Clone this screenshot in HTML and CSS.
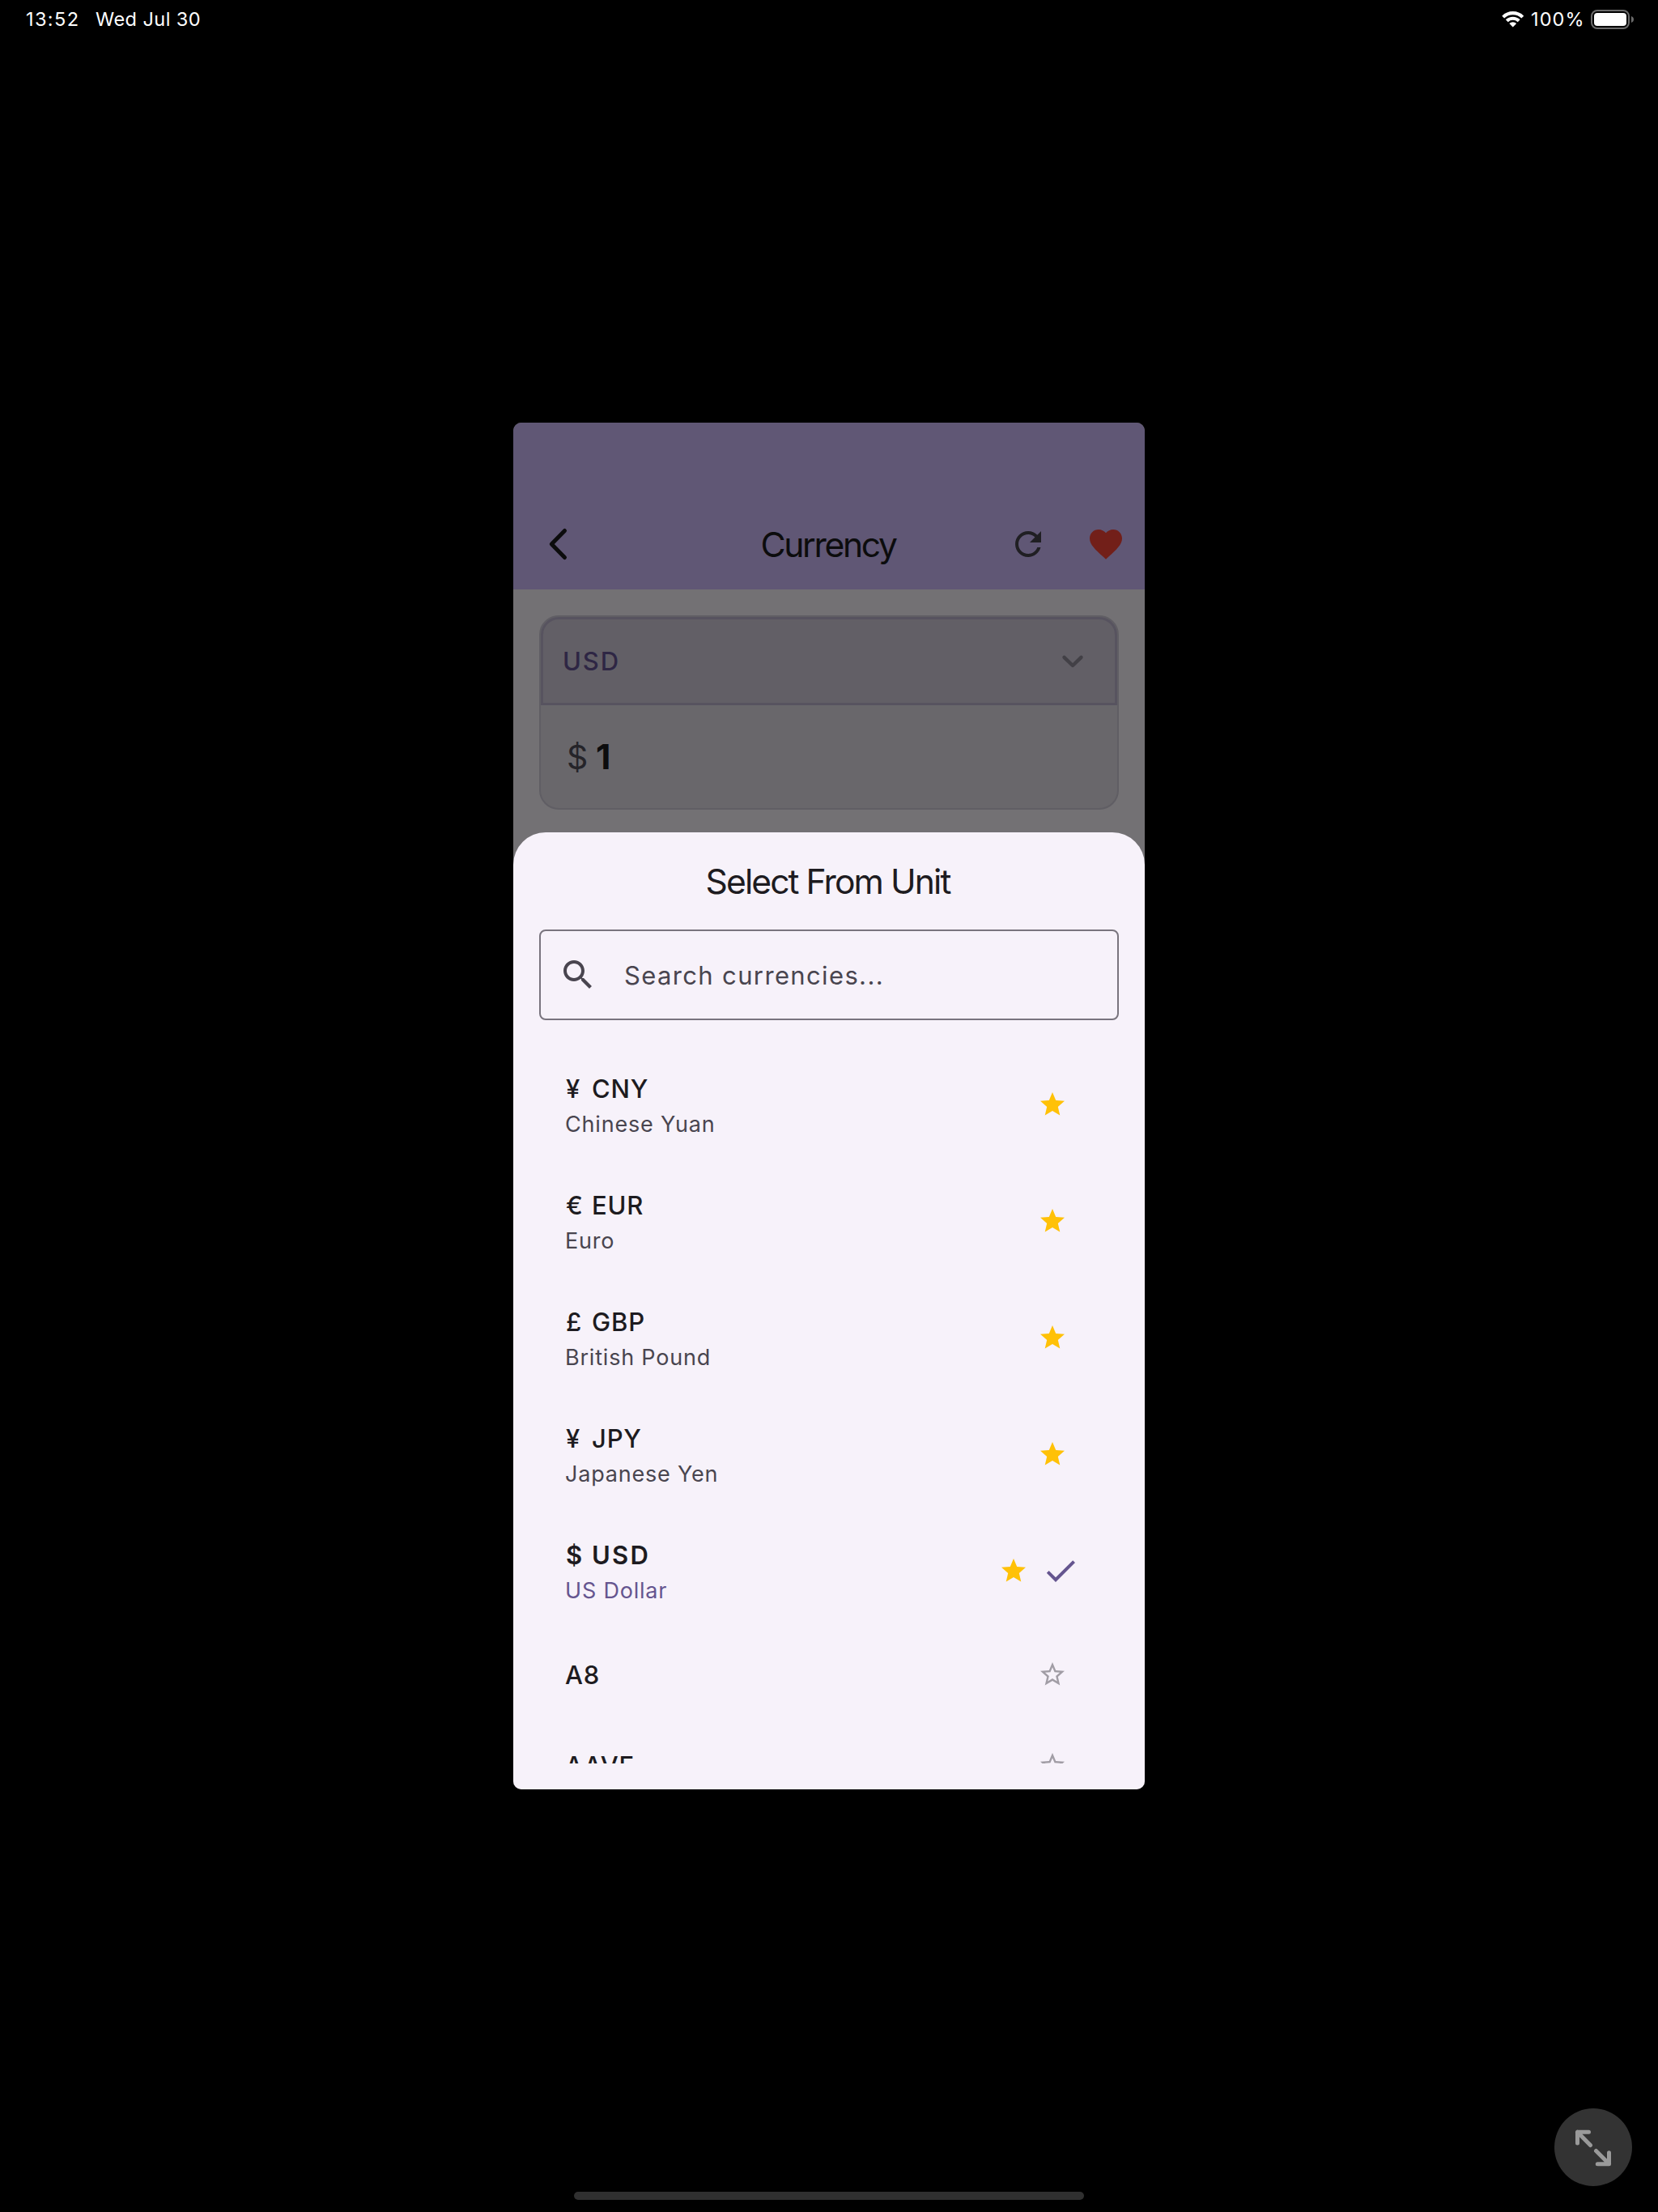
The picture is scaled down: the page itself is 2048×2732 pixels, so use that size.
FILE: index.html
```
<!DOCTYPE html>
<html lang="en">
<head>
<meta charset="utf-8">
<title>Currency</title>
<link rel="stylesheet" href="styles.css">
</head>
<body>
<svg class="sprite" width="0" height="0">
  <symbol id="star" viewBox="0 0 24 24"><path d="M12 17.27 18.18 21l-1.64-7.03L22 9.24l-7.19-.61L12 2 9.19 8.63 2 9.24l5.46 4.73L5.82 21z"/></symbol>
  <symbol id="star-border" viewBox="0 0 24 24"><path d="M22 9.24l-7.19-.62L12 2 9.19 8.63 2 9.24l5.46 4.73L5.82 21 12 17.27 18.18 21l-1.63-7.03L22 9.24zM12 15.4l-3.76 2.27 1-4.28-3.32-2.88 4.38-.38L12 6.1l1.71 4.04 4.38.38-3.32 2.88 1 4.28L12 15.4z"/></symbol>
</svg>
<header class="status">
  <span class="time">13:52</span>
  <span class="date">Wed Jul 30</span>
  <svg class="wifi" width="28" height="22" viewBox="0 0 28 22"><g fill="none" stroke="#fff" stroke-width="4.1"><path d="M1.7 8.1a17.2 17.2 0 0 1 24.1 0"/><path d="M6.3 12.8a10.6 10.6 0 0 1 14.9 0"/></g><path d="M9.3 16.1a6.3 6.3 0 0 1 8.9 0L13.75 20.6z" fill="#fff"/></svg>
  <span class="percent">100%</span>
  <svg class="battery" width="54" height="24" viewBox="0 0 54 24"><rect x="1" y="1" width="46" height="22" rx="7" fill="none" stroke="#6b6b6b" stroke-width="2"/><rect x="4" y="4" width="40" height="16" rx="4" fill="#fff"/><path d="M50 8c4 1.2 4 6.800 0 8z" fill="#6b6b6b"/></svg>
</header>
<main class="phone">
  <div class="appbar">
    <div class="side"><svg class="back" width="26" height="44" viewBox="0 0 26 44"><path d="M21.500 5.500 5.300 22l16.200 16.500" fill="none" stroke="#0c0c0d" stroke-width="5" stroke-linecap="round" stroke-linejoin="round"/></svg></div>
    <h1>Currency</h1>
    <div class="side actions">
      <svg width="48" height="48" viewBox="0 0 24 24" fill="#201f23"><path d="M17.650 6.350C16.200 4.900 14.210 4 12 4c-4.420 0-7.990 3.580-7.990 8s3.570 8 7.990 8c3.730 0 6.840-2.550 7.730-6h-2.080c-.82 2.330-3.040 4-5.650 4-3.310 0-6-2.690-6-6s2.690-6 6-6c1.660 0 3.140.69 4.220 1.780L13 11h7V4l-2.350 2.350z"/></svg>
      <svg width="48" height="48" viewBox="0 0 24 24" fill="#721f19"><path d="m12 21.350-1.450-1.320C5.400 15.360 2 12.280 2 8.500 2 5.420 4.420 3 7.500 3c1.740 0 3.410.81 4.500 2.090C13.090 3.810 14.760 3 16.500 3 19.580 3 22 5.420 22 8.500c0 3.780-3.400 6.860-8.550 11.540L12 21.350z"/></svg>
    </div>
  </div>
  <section class="card">
    <div class="unit"><span>USD</span><svg width="30" height="20" viewBox="0 0 30 20"><path d="M4.500 4.800 15 15 25.500 4.800" fill="none" stroke="#424046" stroke-width="4.400" stroke-linecap="round" stroke-linejoin="round"/></svg></div>
    <div class="amount"><span class="sign">$</span><span class="value">1</span></div>
  </section>
  <section class="sheet">
    <h2>Select From Unit</h2>
    <div class="search">
      <svg width="48" height="48" viewBox="0 0 24 24" fill="#49454f"><path d="M15.500 14h-.79l-.28-.27C15.410 12.590 16 11.110 16 9.500 16 5.910 13.090 3 9.500 3S3 5.910 3 9.500 5.910 16 9.500 16c1.610 0 3.090-.59 4.230-1.570l.27.28v.79l5 4.990L20.490 19l-4.990-5zm-6 0C7.010 14 5 11.990 5 9.500S7.010 5 9.500 5 14 7.010 14 9.500 11.990 14 9.500 14z"/></svg>
      <span>Search currencies...</span>
    </div>
    <ul class="list">
      <li><div class="text"><p class="code"><span class="symbol">¥</span> <span>CNY</span></p><p class="name">Chinese Yuan</p></div><svg class="star"><use href="#star"/></svg></li>
      <li><div class="text"><p class="code"><span class="symbol">€</span> <span>EUR</span></p><p class="name">Euro</p></div><svg class="star"><use href="#star"/></svg></li>
      <li><div class="text"><p class="code"><span class="symbol">£</span> <span>GBP</span></p><p class="name">British Pound</p></div><svg class="star"><use href="#star"/></svg></li>
      <li><div class="text"><p class="code"><span class="symbol">¥</span> <span>JPY</span></p><p class="name">Japanese Yen</p></div><svg class="star"><use href="#star"/></svg></li>
      <li class="selected"><div class="text"><p class="code"><span class="symbol">$</span> <span>USD</span></p><p class="name">US Dollar</p></div><svg class="star"><use href="#star"/></svg><svg width="48" height="48" viewBox="0 0 24 24" fill="#65558f"><path d="M9 16.170 4.830 12l-1.420 1.410L9 19 21 7l-1.410-1.410z"/></svg></li>
      <li class="single"><div class="text"><p class="code"><span>A8</span></p></div><svg class="star off"><use href="#star-border"/></svg></li>
      <li class="single"><div class="text"><p class="code"><span>AAVE</span></p></div><svg class="star off"><use href="#star-border"/></svg></li>
    </ul>
  </section>
</main>
<button class="expand" aria-label="Expand"><svg width="48" height="48" viewBox="0 0 48 48"><g fill="none" stroke="#9a9a9a" stroke-width="5" stroke-linecap="round" stroke-linejoin="round"><path d="M18.500 5.200H4.500V19M4.500 5.200 20.500 21.500M27.500 28.500 43.500 44.500M29.300 44.700H43.500V30.700"/></g></svg></button>
<div class="home"></div>
</body>
</html>
```
FILE: styles.css
```
* { box-sizing: border-box; margin: 0; padding: 0; }
body {
  position: relative;
  height: 2732px;
  background: #000;
  font-family: Inter, "Liberation Sans", sans-serif;
  overflow: hidden;
}
.sprite { position: absolute; }
svg { display: block; flex: none; }

.status {
  display: flex;
  align-items: center;
  height: 48px;
  padding: 0 29px 0 32px;
  color: #fff;
  font-size: 23.5px;
  font-weight: 400;
  line-height: 48px;
}
.time { width: 86px; letter-spacing: 1.4px; }
.date { letter-spacing: 0.45px; }
.wifi { margin-left: auto; }
.percent { width: 74px; margin-left: 8px; letter-spacing: 1.1px; }

.phone {
  display: flex;
  flex-direction: column;
  width: 780px;
  height: 1688px;
  margin: 474px auto 0;
  border-radius: 10px;
  background: #737174;
  overflow: hidden;
}
.appbar {
  display: flex;
  align-items: center;
  height: 206px;
  padding: 94px 24px 0;
  background: #605775;
}
.side { flex: 1 1 0; display: flex; }
.back { margin-left: 18px; }
.actions { justify-content: flex-end; gap: 48px; }
.appbar h1 {
  padding: 2px 2px 0 0;
  font-size: 42.6px;
  font-weight: 400;
  line-height: 56px;
  letter-spacing: -2.35px;
  color: #0c0c0d;
}
.card {
  height: 240px;
  margin: 32px 32px 0;
  border: 2px solid #605e64;
  border-radius: 24px;
  background: #69676b;
}
.unit {
  display: flex;
  align-items: center;
  justify-content: space-between;
  height: 109px;
  padding: 0 37px 0 24px;
  border: 3px solid #57535f;
  border-radius: 22px 22px 0 0;
  background: #625f66;
  color: #2e2644;
  font-size: 31px;
  font-weight: 500;
  letter-spacing: 1.9px;
}
.amount {
  display: flex;
  align-items: center;
  height: 127px;
  padding-left: 32px;
  font-size: 42.6px;
  line-height: 56px;
}
.sign { width: 36px; color: #252429; font-size: 41px; }
.value { color: #0c0c0d; font-weight: 700; }

.sheet {
  display: flex;
  flex-direction: column;
  height: 1181.6px;
  margin-top: 28.4px;
  padding: 32px;
  border-radius: 40px 40px 0 0;
  background: #f7f2fa;
  color: #1d1b20;
}
.sheet h2 {
  height: 56px;
  padding: 1px 3px 0 0;
  font-size: 42.6px;
  font-weight: 400;
  line-height: 56px;
  letter-spacing: -1.93px;
  text-align: center;
}
.search {
  display: flex;
  align-items: center;
  gap: 33px;
  flex: none;
  height: 112px;
  margin: 32px 0;
  padding-left: 22px;
  border: 2px solid #79747e;
  border-radius: 8px;
  color: #49454f;
  font-size: 31px;
  font-weight: 400;
  letter-spacing: 1.36px;
}
.list { flex: 1; min-height: 0; overflow: hidden; list-style: none; }
.list li {
  display: flex;
  align-items: center;
  height: 144px;
  padding: 0 48px 0 32px;
}
.list .single { height: 112px; }
.text { flex: 1; padding-top: 2px; }
.code {
  display: flex;
  font-size: 31px;
  font-weight: 500;
  line-height: 48px;
  letter-spacing: 0.8px;
}
.symbol { width: 33px; padding-left: 1px; }
.name {
  color: #49454f;
  font-size: 27px;
  font-weight: 400;
  line-height: 40px;
  letter-spacing: 0.8px;
}
.selected .code { font-weight: 600; letter-spacing: 2.3px; }
.selected .name { color: #65558f; }
.star { width: 36px; height: 36px; margin: 0 16px; fill: #ffc107; }
.star.off { fill: #a19da5; }

.expand {
  position: absolute;
  right: 32px;
  bottom: 32px;
  display: grid;
  place-items: center;
  width: 96px;
  height: 96px;
  border: 0;
  border-radius: 50%;
  background: #333;
}
.home {
  position: absolute;
  left: 709px;
  bottom: 15px;
  width: 630px;
  height: 10px;
  border-radius: 5px;
  background: #303030;
}
```
